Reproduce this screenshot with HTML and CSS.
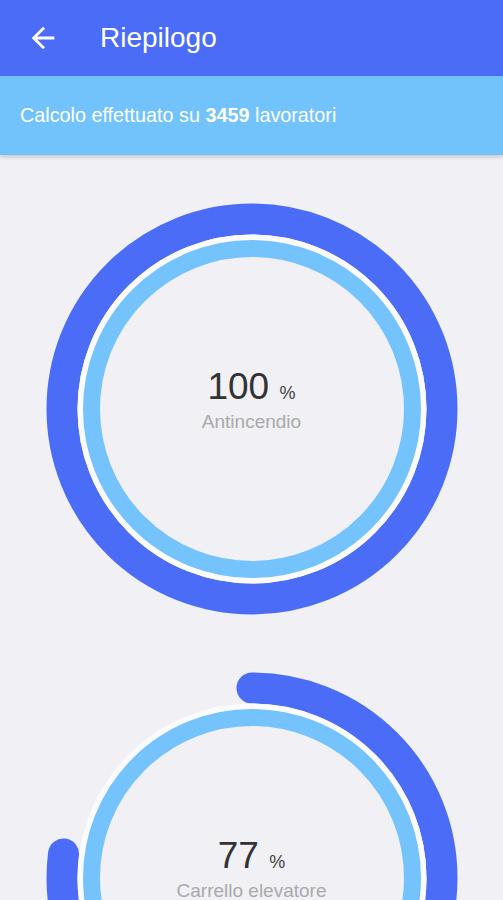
FILE: index.html
```html
<!DOCTYPE html>
<html lang="it">
<head>
    <meta charset="UTF-8">
    <title>Riepilogo</title>
    <link rel="stylesheet" href="styles.css">
</head>
<body>
<div id="app">
    <div class="topbar">
        <svg class="back" viewBox="0 0 24 24" width="34" height="34">
            <path d="M20 11H7.83l5.59-5.59L12 4l-8 8 8 8 1.41-1.41L7.83 13H20v-2z" fill="#fff"/>
        </svg>
        <span class="title">Riepilogo</span>
    </div>
    <div class="info">
        <span>Calcolo effettuato su <b>3459</b> lavoratori</span>
    </div>

    <div class="list">
        <div class="chart">
            <svg viewBox="0 0 420 420" width="420" height="420">
                <circle cx="210" cy="210" r="190" fill="none" stroke="#4a6cf7" stroke-width="31"/>
                <circle cx="210" cy="210" r="171.5" fill="none" stroke="#fbfbfd" stroke-width="6"/>
                <circle cx="210" cy="210" r="160.5" fill="none" stroke="#74c3fd" stroke-width="17"/>
            </svg>
            <div class="label">
                <div class="num">100 <small>%</small></div>
                <div class="name">Antincendio</div>
            </div>
        </div>

        <div class="chart">
            <svg viewBox="0 0 420 420" width="420" height="420">
                <circle cx="210" cy="210" r="190" fill="none" stroke="#4a6cf7" stroke-width="31"
                        stroke-linecap="round" stroke-dasharray="919.2 1193.8"
                        transform="rotate(-90 210 210)"/>
                <circle cx="210" cy="210" r="171.5" fill="none" stroke="#fbfbfd" stroke-width="6"/>
                <circle cx="210" cy="210" r="160.5" fill="none" stroke="#74c3fd" stroke-width="17"/>
            </svg>
            <div class="label">
                <div class="num">77 <small>%</small></div>
                <div class="name">Carrello elevatore</div>
            </div>
        </div>
    </div>
</div>
</body>
</html>
```
FILE: styles.css
```css
* {
    margin: 0;
    padding: 0;
    box-sizing: border-box;
}

body {
    background-color: #f0f0f5;
    font-family: "Liberation Sans", Arial, sans-serif;
    overflow: hidden;
}

#app {
    height: 900px;
    overflow: hidden;
}

.topbar {
    height: 76px;
    background-color: #4a6cf7;
    display: flex;
    align-items: center;
    padding-left: 26px;
    gap: 40px;
}

.topbar .back {
    display: block;
}

.topbar .title {
    color: #fff;
    font-size: 28px;
    margin-top: -1px;
}

.info {
    height: 79px;
    background-color: #72c3fc;
    color: #fff;
    font-size: 19.8px;
    display: flex;
    align-items: center;
    padding-left: 20px;
    box-shadow: 0 2px 4px rgba(0, 0, 0, 0.18);
    position: relative;
}

.list {
    padding-top: 44px;
    display: flex;
    flex-direction: column;
    align-items: center;
    gap: 49px;
}

.chart {
    display: grid;
    place-items: center;
    width: 420px;
    height: 420px;
}

.chart svg,
.chart .label {
    grid-area: 1 / 1;
}

.chart svg {
    display: block;
}

.label {
    text-align: center;
    margin-bottom: 20px;
}

.num {
    font-size: 37px;
    color: #333;
    line-height: 40px;
}

.num small {
    font-size: 18px;
    color: #444;
}

.name {
    font-size: 19px;
    color: #aaa;
    line-height: 18px;
}
```
